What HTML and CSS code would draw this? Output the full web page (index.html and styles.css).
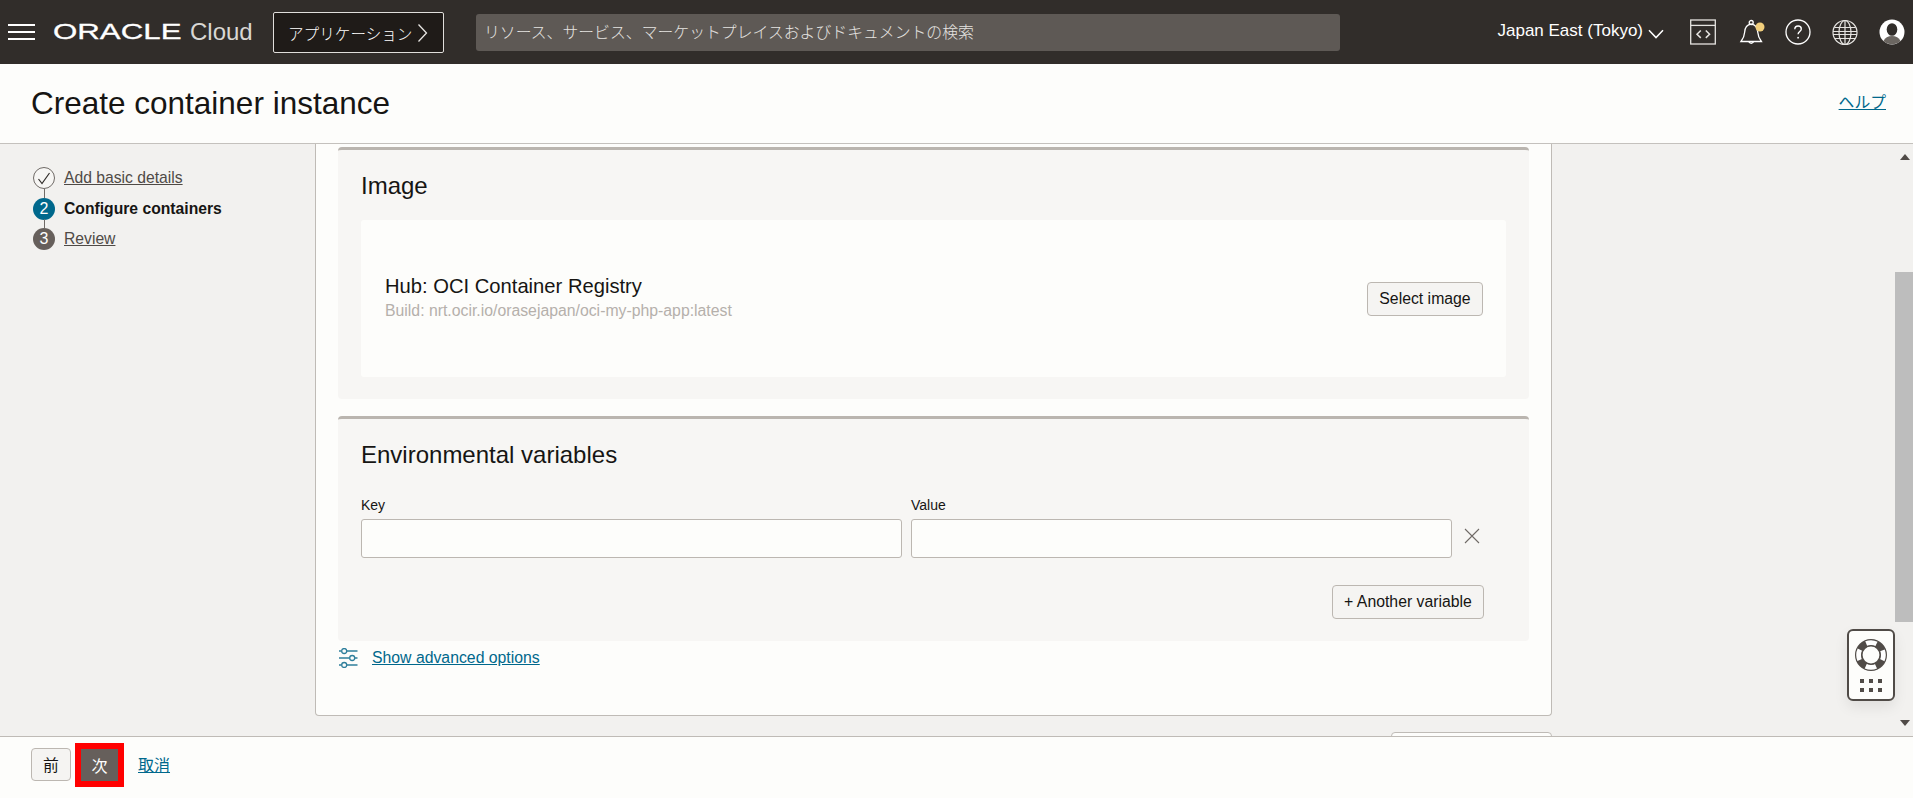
FILE: index.html
```html
<!DOCTYPE html>
<html lang="ja">
<head>
<meta charset="utf-8">
<title>Create container instance</title>
<link rel="stylesheet" href="styles.css">
</head>
<body>
<header class="topbar">
  <div class="burger"><i></i><i></i><i></i></div>
  <div class="brand"><span class="oracle">ORACLE</span><span class="cloud">Cloud</span></div>
  <button class="apps">アプリケーション<svg class="apps-chev" width="11" height="20" viewBox="0 0 11 20"><path d="M1.5 1.5 9.5 10 1.5 18.5" fill="none" stroke="#e8e6e3" stroke-width="1.3"/></svg></button>
  <div class="search">リソース、サービス、マーケットプレイスおよびドキュメントの検索</div>
  <div class="region">Japan East (Tokyo)<svg class="region-chev" width="16" height="10" viewBox="0 0 16 10"><path d="M1 1.2 8 8.6 15 1.2" fill="none" stroke="#fff" stroke-width="1.5"/></svg></div>
  <div class="tools">
    <svg width="26" height="26" viewBox="0 0 26 26" fill="none" stroke="#e6e4e1"><g transform="translate(-1 0)"><rect x=".7" y="1" width="24.6" height="24" stroke-width="1.3"/><path d="M.7 6.400H25.300" stroke-width="1.300"/><path d="M10.800 11.500 7 15.200l3.800 3.700M15.800 11.500l3.800 3.700-3.800 3.700" stroke-width="1.500"/></g></svg>
    <svg width="26" height="28" viewBox="0 0 26 28" fill="none" stroke="#fff" stroke-width="1.3"><path d="M3 23.5c2.2-3 3.4-5 3.6-9 .3-5 2.8-8 6.6-8.300 3.800.3 6.300 3.300 6.600 8.300.2 4 1.400 6 3.600 9z"/><circle cx="13.200" cy="4.500" r="2"/><path d="M10.800 23.800a2.700 2.700 0 0 0 4.800 0"/><circle cx="22" cy="9" r="4.500" fill="#f2cf7c" stroke="none"/></svg>
    <svg width="26" height="26" viewBox="0 0 26 26" fill="none" stroke="#fff"><circle cx="13" cy="13" r="12" stroke-width="1.300"/><path d="M9.800 10.200c0-2 1.400-3.200 3.300-3.200s3.200 1.200 3.200 2.900c0 2.500-3.200 2.600-3.200 5.300" stroke-width="1.400"/><circle cx="13.100" cy="18.700" r=".9" fill="#fff" stroke="none"/></svg>
    <svg width="26" height="26" viewBox="0 0 26 26" fill="none" stroke="#e6e4e1" stroke-width="1.200"><circle cx="13" cy="13.500" r="12"/><ellipse cx="13" cy="13.500" rx="6" ry="12"/><path d="M13 1.500v24M2.500 8.500h21M1 12.500h24M1 15.500h24M2.500 19.500h21"/></svg>
    <svg width="26" height="26" viewBox="0 0 26 26"><circle cx="13" cy="13" r="12.500" fill="#fff"/><ellipse cx="13" cy="10.500" rx="5.300" ry="6.300" fill="#312d2a"/><path d="M4.500 22c1.500-3.500 4.500-5 8.500-5s7 1.500 8.500 5a12.500 12.500 0 0 1-17 0z" fill="#6b6661"/></svg>
  </div>
</header>

<section class="titlebar">
  <h1 class="page-title">Create container instance</h1>
  <a class="link help" href="#">ヘルプ</a>
</section>

<main class="workspace">
  <nav class="steps">
    <div class="step">
      <span class="dot dot-done"><svg width="14" height="13" viewBox="0 0 14 13"><path d="M1.500 7 5 11.500 12.500 1" fill="none" stroke="#312d2a" stroke-width="1.200"/></svg></span>
      <a class="step-link" href="#">Add basic details</a>
    </div>
    <div class="step">
      <span class="dot dot-active">2</span>
      <b class="step-current">Configure containers</b>
    </div>
    <div class="step">
      <span class="dot dot-todo">3</span>
      <a class="step-link" href="#">Review</a>
    </div>
  </nav>

  <div class="content">
    <div class="card">
      <section class="panel panel-image">
        <h2 class="panel-title">Image</h2>
        <div class="image-box">
          <div class="image-text">
            <div class="hub">Hub: OCI Container Registry</div>
            <div class="build">Build: nrt.ocir.io/orasejapan/oci-my-php-app:latest</div>
          </div>
          <button class="btn btn-select">Select image</button>
        </div>
      </section>

      <section class="panel panel-env">
        <h2 class="panel-title panel-title-env">Environmental variables</h2>
        <div class="env-row">
          <label class="field"><span class="field-label">Key</span><input class="input" type="text"></label>
          <label class="field"><span class="field-label">Value</span><input class="input" type="text"></label>
          <svg class="remove" width="16" height="16" viewBox="0 0 16 16"><path d="M1 1 15 15M15 1 1 15" stroke="#6f6a66" stroke-width="1.100" fill="none"/></svg>
        </div>
        <div class="env-actions"><button class="btn btn-wide">+ Another variable</button></div>
      </section>

      <div class="advanced">
        <svg width="20" height="20" viewBox="0 0 20 20" fill="none" stroke="#2f7f9c" stroke-width="1.300"><path d="M1 3h2.500M9 3h10.500M1 10h10.500M17 10h2.500M1 17h2.500M9 17h10.500"/><circle cx="6.200" cy="3" r="2.500"/><circle cx="14.200" cy="10" r="2.500"/><circle cx="6.200" cy="17" r="2.500"/></svg>
        <a class="link" href="#">Show advanced options</a>
      </div>
    </div>
    <div class="next-card"></div>
  </div>

  <div class="scrollbar">
    <span class="arrow arrow-up"></span>
    <span class="thumb"></span>
    <span class="arrow arrow-down"></span>
  </div>

  <aside class="widget">
    <svg width="34" height="34" viewBox="0 0 34 34"><circle cx="17" cy="17" r="12.300" fill="none" stroke="#504b47" stroke-width="7.400"/><circle cx="17" cy="17" r="12.300" fill="none" stroke="#fff" stroke-width="5" stroke-dasharray="10.500 8.820" stroke-dashoffset="5.250"/><circle cx="17" cy="17" r="9.200" fill="#fdfdfb"/><circle cx="17" cy="17" r="9.200" fill="none" stroke="#504b47" stroke-width="1.600"/></svg>
    <div class="widget-dots"><i></i><i></i><i></i><i></i><i></i><i></i></div>
  </aside>
</main>

<footer class="footer">
  <button class="btn btn-prev">前</button>
  <button class="btn-next">次</button>
  <a class="link cancel" href="#">取消</a>
</footer>
</body>
</html>
```
FILE: styles.css
```css
* { box-sizing: border-box; }
html, body { margin: 0; height: 100%; }
body {
  display: flex;
  flex-direction: column;
  height: 798px;
  overflow: hidden;
  font-family: "Liberation Sans", "Noto Sans CJK JP", sans-serif;
  font-size: 16px;
  color: #161513;
  background: #f2f1ef;
}
button { font: inherit; cursor: pointer; }

.topbar {
  flex: 0 0 64px;
  display: flex;
  align-items: center;
  padding: 0 8px;
  background: #312d2a;
  color: #fff;
}
.burger { width: 27px; display: flex; flex-direction: column; gap: 5px; }
.burger i { display: block; height: 2px; background: #fff; }
.brand { display: flex; align-items: center; width: 219px; margin-left: 18px; }
.oracle {
  display: inline-block;
  width: 129px;
  font-size: 22px;
  line-height: 24px;
  transform: scaleX(1.42);
  transform-origin: left center;
  -webkit-text-stroke: .3px #fff;
}
.cloud { margin-left: 8px; font-size: 24px; line-height: 28px; color: #d9d7d4; }
.apps {
  flex: 0 0 171px;
  height: 41px;
  margin-top: 1px;
  margin-left: 1px;
  display: flex;
  align-items: center;
  gap: 5px;
  padding: 0 0 0 14px;
  border: 1px solid #e0dedb;
  border-radius: 2px;
  background: #1f1b18;
  color: #fff;
  font-size: 15.600px;
  font-weight: 300;
  white-space: nowrap;
}
.search {
  flex: 0 0 864px;
  height: 37px;
  margin-left: 32px;
  padding-left: 8px;
  line-height: 38px;
  border-radius: 3px;
  background: #5e5955;
  color: #e6e4e1;
  white-space: nowrap;
  font-size: 15.850px;
  font-weight: 300;
}
.region {
  margin-left: auto;
  margin-right: 27px;
  display: flex;
  align-items: center;
  margin-top: -3px;
  font-size: 17px;
  white-space: nowrap;
}
.region-chev { margin: 6px 0 0 5px; }
.tools { display: flex; align-items: center; gap: 21px; }
.tools svg { display: block; overflow: visible; }

.titlebar {
  flex: 0 0 80px;
  display: flex;
  align-items: center;
  justify-content: space-between;
  padding: 0 27px 2px 31px;
  border-bottom: 1px solid #c4c1bd;
  background: #fdfdfb;
}
.page-title { margin: 0; font-size: 31.500px; font-weight: 400; line-height: 40px; }
.help { margin-top: -2px; }
.link { color: #00688c; font-size: 15.800px; text-decoration: underline; white-space: nowrap; }

.workspace { position: relative; flex: 1 1 0; min-height: 0; display: flex; overflow: hidden; }
.steps { flex: 0 0 315px; padding-top: 23px; background: #f2f1ef; }
.step { position: relative; display: flex; align-items: center; height: 22px; margin-bottom: 8px; padding-left: 33px; font-size: 15.700px; }
.step:first-child { margin-bottom: 9px; }
.dot {
  flex: 0 0 22px;
  height: 22px;
  margin-right: 9px;
  display: flex;
  align-items: center;
  justify-content: center;
  border-radius: 50%;
  color: #fff;
  font-size: 16px;
}
.step + .step::before {
  content: "";
  position: absolute;
  left: 44px;
  top: -9px;
  width: 1px;
  height: 9px;
  background: #6f6a66;
}
.dot-done { border: 1px solid #6f6a66; background: #f7f6f4; }
.dot-active { background: #00688c; }
.dot-todo { background: #665f5b; }
.step-link { color: #4f4a46; text-decoration: underline; white-space: nowrap; }
.step-current { color: #161513; white-space: nowrap; }

.content { flex: 1 1 0; min-width: 0; overflow: hidden; }
.card {
  width: 1237px;
  height: 572px;
  padding: 3px 22px 0;
  border: 1px solid #bfbbb6;
  border-top: 0;
  border-radius: 0 0 4px 4px;
  background: #fdfdfb;
}
.next-card {
  width: 161px;
  height: 30px;
  margin: 16px 0 0 1076px;
  border: 1px solid #bfbbb6;
  border-radius: 4px;
  background: #fdfdfb;
}
.panel {
  border-top: 3px solid #bab5af;
  border-radius: 4px;
  padding: 0 23px 22px;
  background: #f7f6f4;
}
.panel-env { margin-top: 17px; }
.panel-title { margin: 0; height: 70px; font-size: 24px; font-weight: 400; line-height: 72px; }
.panel-title-env { height: 75px; }
.image-box {
  height: 157px;
  display: flex;
  align-items: center;
  justify-content: space-between;
  padding: 0 23px 0 24px;
  border-radius: 3px;
  background: #fdfdfb;
}
.image-text { margin-top: -3px; }
.hub { font-size: 20.200px; line-height: 27px; }
.build { font-size: 15.800px; line-height: 22px; color: #b5b0ab; }
.btn {
  height: 34px;
  padding: 0;
  border: 1px solid #bcb7b1;
  border-radius: 4px;
  background: #f5f4f2;
  color: #161513;
  font-size: 15.800px;
  white-space: nowrap;
}
.btn-select { width: 116px; }
.btn-wide { width: 152px; }
.env-row { position: relative; display: flex; align-items: flex-start; }
.field { flex: 0 0 541px; margin-right: 9px; display: block; }
.field + .field { flex-basis: 541px; margin-right: 12px; }
.field-label { display: block; height: 25px; padding-top: 1px; font-size: 14px; line-height: 20px; }
.input { display: block; width: 100%; height: 39px; border: 1px solid #bcb7b1; border-radius: 3px; background: #fdfdfb; }
.remove { margin-top: 34px; flex: none; }
.env-actions { display: flex; justify-content: flex-end; margin-top: 27px; padding-right: 22px; }
.advanced { display: flex; align-items: center; gap: 14px; margin-top: 6px; height: 22px; }

.scrollbar { flex: 0 0 18px; position: relative; display: flex; flex-direction: column; align-items: center; }
.thumb { display: block; width: 18px; height: 350px; margin-top: 128px; background: #bdbdbd; }
.arrow { position: absolute; left: 5px; width: 0; height: 0; border-left: 5.500px solid transparent; border-right: 5.500px solid transparent; }
.arrow-up { top: 10px; border-bottom: 6px solid #504b47; }
.arrow-down { bottom: 10px; border-top: 6px solid #504b47; }

.widget {
  position: absolute;
  right: 18px;
  top: 485px;
  width: 48px;
  height: 72px;
  display: flex;
  flex-direction: column;
  align-items: center;
  padding-top: 7px;
  border: 2px solid #504b47;
  border-radius: 6px;
  background: #fdfdfb;
  box-shadow: 0 6px 14px rgba(0, 0, 0, .08);
}
.widget svg { display: block; }
.widget-dots { display: grid; grid-template-columns: repeat(3, 4px); gap: 4.500px 5px; margin-top: 7px; }
.widget-dots i { display: block; height: 4px; background: #504b47; }

.footer {
  flex: 0 0 62px;
  display: flex;
  align-items: center;
  padding: 0 0 6px 31px;
  border-top: 1px solid #bfbbb6;
  background: #fdfdfb;
}
.btn-prev { width: 40px; height: 33px; }
.btn-next {
  width: 49px;
  height: 44px;
  margin-left: 4px;
  padding: 0;
  border: 6px solid #f00;
  background: #665f5b;
  color: #fff;
  font-size: 16px;
}
.cancel { margin-left: 14px; margin-top: -2px; font-size: 16px; }
```
